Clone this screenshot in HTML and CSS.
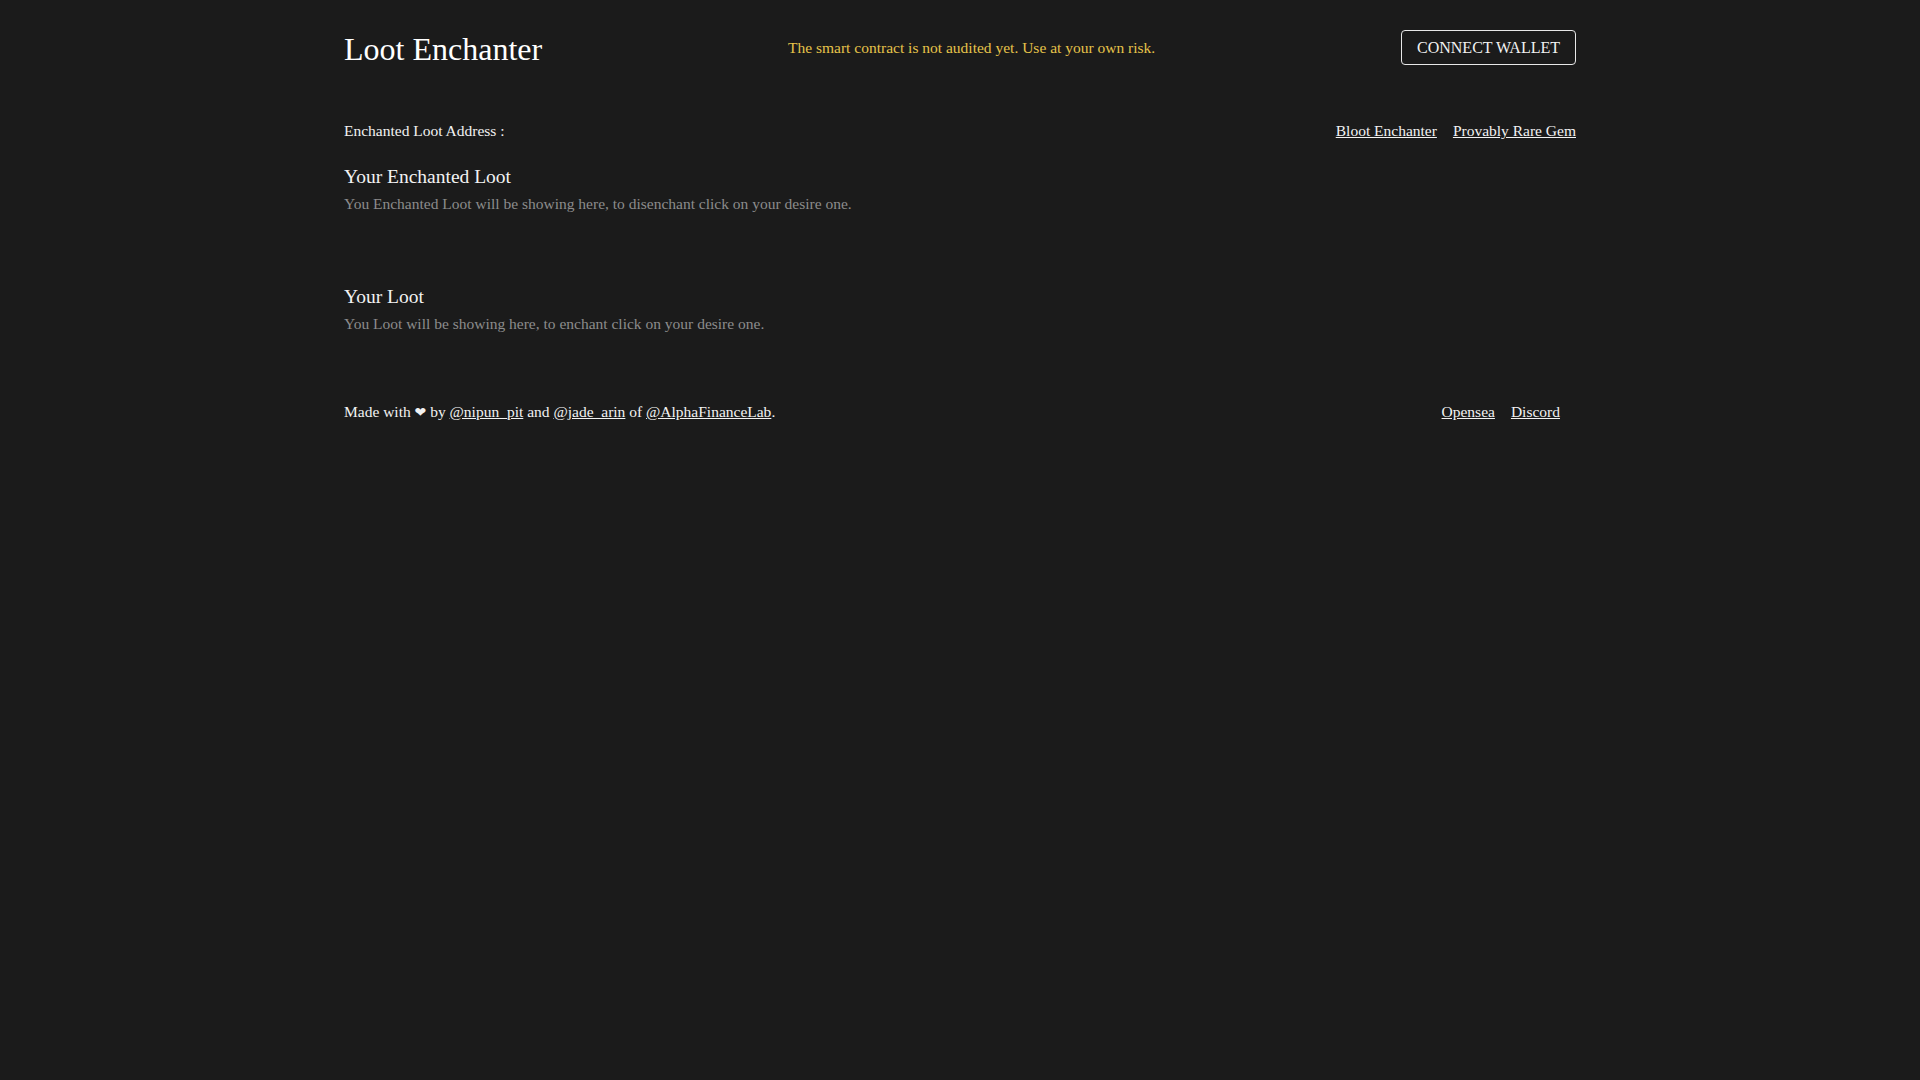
FILE: index.html
```html
<!DOCTYPE html>
<html lang="en">
<head>
<meta charset="utf-8">
<title>Loot Enchanter</title>
<link rel="stylesheet" href="styles.css">
</head>
<body>
<div class="page">
  <header class="header">
    <h1 class="title">Loot Enchanter</h1>
    <p class="warning">The smart contract is not audited yet. Use at your own risk.</p>
    <button class="connect">CONNECT WALLET</button>
  </header>

  <div class="address-row">
    <span class="address">Enchanted Loot Address :</span>
    <nav class="links">
      <a href="#" class="link">Bloot Enchanter</a>
      <a href="#" class="link">Provably Rare Gem</a>
    </nav>
  </div>

  <section class="section first">
    <h2 class="section-title">Your Enchanted Loot</h2>
    <p class="section-desc">You Enchanted Loot will be showing here, to disenchant click on your desire one.</p>
  </section>

  <section class="section second">
    <h2 class="section-title">Your Loot</h2>
    <p class="section-desc">You Loot will be showing here, to enchant click on your desire one.</p>
  </section>

  <footer class="footer">
    <p class="credits">Made with <span class="heart">❤</span> by <a href="#" class="link">@nipun_pit</a> and <a href="#" class="link">@jade_arin</a> of <a href="#" class="link">@AlphaFinanceLab</a>.</p>
    <nav class="links footer-links">
      <a href="#" class="link">Opensea</a>
      <a href="#" class="link">Discord</a>
    </nav>
  </footer>
</div>
</body>
</html>
```

FILE: styles.css
```css
html, body {
  margin: 0;
  padding: 0;
  background: #1b1b1b;
  min-height: 100%;
}

body {
  font-family: "Liberation Serif", "Times New Roman", serif;
  color: #f2f2f2;
  height: 1080px;
}

.page {
  width: 1232px;
  margin: 0 auto;
}

.header {
  display: flex;
  justify-content: space-between;
  align-items: center;
  padding: 30px 0;
}

.title {
  margin: 0;
  font-size: 32px;
  font-weight: normal;
  line-height: 1;
  color: #ffffff;
  position: relative;
  top: 1px;
}

.warning {
  margin: 0;
  font-size: 15.5px;
  line-height: 1;
  color: #e6c34a;
}

.connect {
  height: 35px;
  padding: 0 15px;
  background: transparent;
  border: 1px solid #e8e8e8;
  border-radius: 4px;
  color: #f2f2f2;
  font-family: "Liberation Serif", "Times New Roman", serif;
  font-size: 16px;
  line-height: 1;
  cursor: pointer;
}

.address-row {
  display: flex;
  justify-content: space-between;
  align-items: center;
  margin-top: 26px;
  font-size: 15.5px;
  line-height: 20px;
}

.links {
  display: flex;
  gap: 16px;
}

.link {
  color: #f2f2f2;
  text-decoration: underline;
}

.section-title {
  margin: 0;
  font-size: 19.5px;
  font-weight: normal;
  line-height: 24px;
  color: #f2f2f2;
}

.section-desc {
  margin: 5px 0 0;
  font-size: 15.5px;
  line-height: 20px;
  color: #8c8c8c;
}

.section.first {
  margin-top: 24px;
}

.section.second {
  margin-top: 71px;
}

.footer {
  display: flex;
  justify-content: space-between;
  align-items: center;
  margin-top: 68px;
  padding-right: 16px;
  font-size: 15.5px;
  line-height: 20px;
}

.credits {
  margin: 0;
}

.heart {
  font-family: "DejaVu Sans", sans-serif;
  font-size: 14px;
}

.footer-links {
  gap: 16px;
}
```
